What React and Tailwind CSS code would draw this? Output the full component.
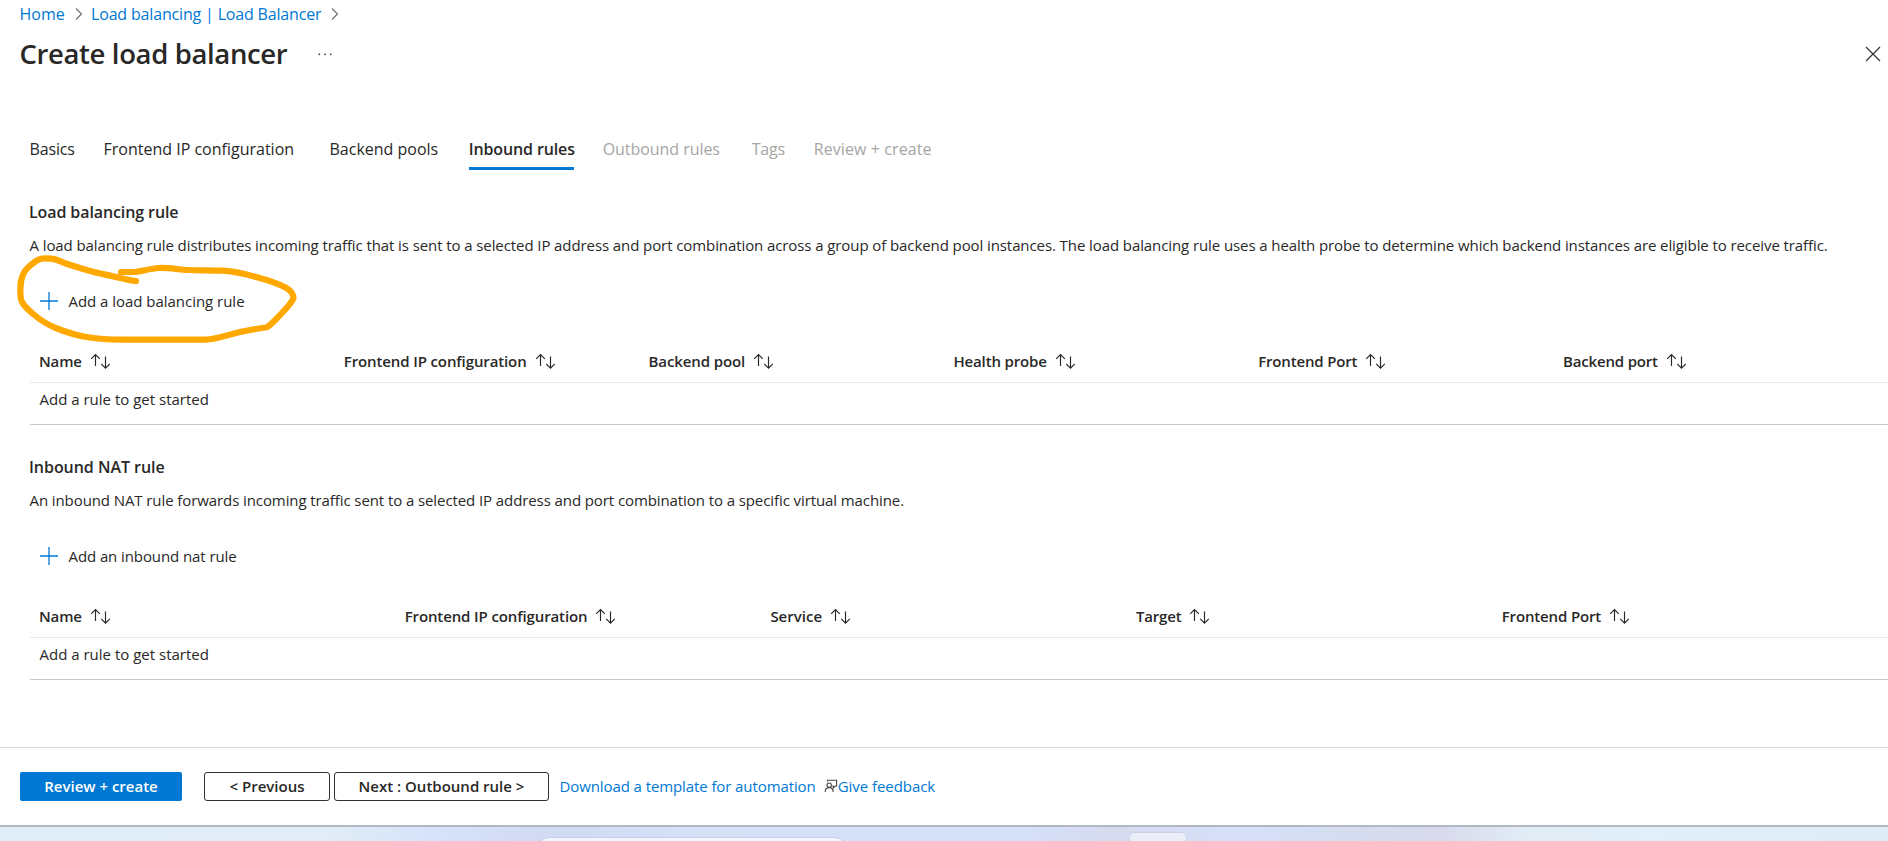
const CREATE_TABS = [
  { label: "Basics", cls: "w-[74px] tracking-[-0.15px] text-[#292827]" },
  { label: "Frontend IP configuration", cls: "w-[226px] text-[#292827]" },
  { label: "Backend pools", cls: "w-[139.2px] text-[#292827]" },
  { label: "Inbound rules", cls: "w-[134px] tracking-[-0.12px] font-semibold text-[#292827]", active: true },
  { label: "Outbound rules", cls: "w-[149px] tracking-[-0.05px] text-[#a6a5a4]" },
  { label: "Tags", cls: "w-[62px] tracking-[-0.2px] text-[#a6a5a4]" },
  { label: "Review + create", cls: "tracking-[0.1px] text-[#a6a5a4]" },
];

const LB_COLUMNS = [
  { label: "Name", cls: "tracking-[-0.15px]" },
  { label: "Frontend IP configuration", cls: "tracking-[-0.12px]" },
  { label: "Backend pool", cls: "tracking-[-0.12px]" },
  { label: "Health probe", cls: "tracking-[-0.14px]" },
  { label: "Frontend Port", cls: "tracking-[-0.17px]" },
  { label: "Backend port", cls: "tracking-[-0.17px]" },
];

const NAT_COLUMNS = [
  { label: "Name", cls: "tracking-[-0.15px]" },
  { label: "Frontend IP configuration", cls: "tracking-[-0.12px]" },
  { label: "Service" },
  { label: "Target", cls: "tracking-[-0.2px]" },
  { label: "Frontend Port", cls: "tracking-[-0.15px]" },
];

function Chevron() {
  return (
    <svg className="shrink-0" width="8" height="12" viewBox="0 0 8 12" fill="none" stroke="#6f6e6d" strokeWidth="1.1">
      <path d="M1 0.5 L6.5 6 L1 11.5" />
    </svg>
  );
}

function SortIcon() {
  return (
    <svg className="ml-2 shrink-0" width="21" height="16" viewBox="0 0 21 16" fill="none" stroke="#292827" strokeWidth="1.15">
      <path d="M5.5 13 V1.6 M1.2 5.8 L5.5 1.5 L9.8 5.8" />
      <path d="M15.5 3.6 V15 M11.2 10.8 L15.5 15.1 L19.8 10.8" />
    </svg>
  );
}

function PlusIcon() {
  return (
    <svg className="shrink-0" width="18" height="18" viewBox="0 0 18 18" fill="none" stroke="#0078d4" strokeWidth="1.3">
      <path d="M9 0 V18 M0 9 H18" />
    </svg>
  );
}

function FeedbackIcon() {
  return (
    <svg className="-mt-[2px] shrink-0" width="14" height="14" viewBox="0 0 14 14" fill="none" stroke="#484746" strokeWidth="1.1">
      <path d="M3.4 2.6 V1.2 H12.6 V7 H11.2 L9.2 9 V7 H8.4" />
      <circle cx="5.2" cy="6.2" r="2.2" />
      <path d="M1.2 13 C1.2 10.2 3 8.6 5.2 8.6 C7.4 8.6 9.2 10.2 9.2 13" />
    </svg>
  );
}

function RuleTable({ columns, gridCls }) {
  return (
    <div className="ml-[30px] flex flex-col">
      <div className={"grid h-[43px] border-b border-[#e9e8e7] pl-[9px] " + gridCls}>
        {columns.map((c) => (
          <div key={c.label} className="flex items-center text-[15px] font-semibold whitespace-nowrap">
            <span className={c.cls}>{c.label}</span>
            <SortIcon />
          </div>
        ))}
      </div>
      <div className="flex h-[42px] items-center border-b border-[#c8c7c6] pb-[9px] pl-[9.5px] text-[15px]">
        Add a rule to get started
      </div>
    </div>
  );
}

function Section({ title, titleCls, description, action, actionCls, columns, gridCls, children }) {
  return (
    <section className="flex flex-col">
      <h2 className={"ml-[29px] flex h-6 items-center text-[16px] font-semibold " + titleCls}>{title}</h2>
      <p className="mt-[9px] ml-[29.5px] flex h-6 items-center text-[15px] tracking-[-0.09px] whitespace-nowrap">
        {description}
      </p>
      <div className="relative mt-[28px] ml-[39.5px] flex h-8 w-max items-center gap-[11px] text-[15px]">
        <PlusIcon />
        <span className={actionCls}>{action}</span>
        {children}
      </div>
      <div className="h-[23px]" />
      <RuleTable columns={columns} gridCls={gridCls} />
    </section>
  );
}

function HighlightStroke() {
  return (
    <svg
      className="pointer-events-none absolute top-[-35px] left-[-29.5px]"
      width="300"
      height="100"
      viewBox="10 250 300 100"
      fill="none"
      stroke="#ffa800"
      strokeWidth="6.2"
      strokeLinecap="round"
      strokeLinejoin="round"
    >
      <path d="M136 281 C130 280.5 124 279 118 277.5 C108 275 99 273.5 90 271 C81 268.5 73 266 65 263.3 C59 260.5 55 259.2 51 258.7 C47 258.2 44 258 41 258.7 C37.5 259.7 35 261.5 32.6 263.5 C28 267 25 270 23.3 274 C21 279 20.4 283 20.4 288 C20.4 293 20 297 21.6 301 C23.5 306 28 309.5 32.6 313.5 C40 320 48 325 57 328.5 C67 332.5 77 335.5 88 337.3 C99 339.2 110 339.7 122 339.7 L206 339.7 C214 339.3 221 337 228.6 335 C241 331.5 254 329 267 327.3 C273 323 277 318 281.6 313.3 C286 308.5 291 304 293.5 298.3 C293.5 294 290.5 290.5 286 287.7 C277 283 267 280 257 277.3 C246 274 234 271.5 222.4 270.7 C211 270.2 199 270.5 188 270 C178 269.5 168 267.5 159 268 C150 268.5 143 271 134.7 272 L121 272" />
    </svg>
  );
}

export default function App() {
  return (
    <div className="flex h-[841px] w-full flex-col overflow-hidden bg-white font-['Open_Sans',sans-serif] text-[#292827]">
      <nav className="flex h-7 items-center pl-[19.5px] text-[16px] text-[#0078d4]">
        <a className="w-[55px]">Home</a>
        <Chevron />
        <a className="mr-[9.5px] ml-[8.5px] tracking-[-0.17px]">Load balancing | Load Balancer</a>
        <Chevron />
      </nav>

      <header className="flex h-[50px] items-center pt-px pr-[7px] pl-[19.5px]">
        <h1 className="pt-px text-[27.5px] leading-none font-semibold tracking-[-0.37px]">Create load balancer</h1>
        <svg className="ml-[30px]" width="16" height="4" viewBox="0 0 16 4" fill="#484746">
          <rect x="1.5" y="1.5" width="1.6" height="1.6" />
          <rect x="7.2" y="1.5" width="1.6" height="1.6" />
          <rect x="12.9" y="1.5" width="1.6" height="1.6" />
        </svg>
        <svg className="ml-auto" width="16" height="16" viewBox="0 0 16 16" fill="none" stroke="#323130" strokeWidth="1.2">
          <path d="M1 1 L15 15 M15 1 L1 15" />
        </svg>
      </header>

      <div className="mt-[52px] flex h-10 pl-[29.5px] text-[16px] whitespace-nowrap">
        {CREATE_TABS.map((t) => (
          <div key={t.label} className={"flex " + t.cls}>
            <span
              className={
                t.active
                  ? "flex w-[105.5px] items-center border-b-[3px] border-[#0078d4]"
                  : "flex items-center border-b-[3px] border-transparent"
              }
            >
              {t.label}
            </span>
          </div>
        ))}
      </div>

      <main className="flex flex-1 flex-col gap-[30px] pt-[30px]">
        <Section
          title="Load balancing rule"
          titleCls="tracking-[-0.1px]"
          description="A load balancing rule distributes incoming traffic that is sent to a selected IP address and port combination across a group of backend pool instances. The load balancing rule uses a health probe to determine which backend instances are eligible to receive traffic."
          action="Add a load balancing rule"
          actionCls="tracking-[-0.03px]"
          columns={LB_COLUMNS}
          gridCls="grid-cols-[repeat(6,304.8px)]"
        >
          <HighlightStroke />
        </Section>
        <Section
          title="Inbound NAT rule"
          titleCls="tracking-[-0.04px]"
          description="An inbound NAT rule forwards incoming traffic sent to a selected IP address and port combination to a specific virtual machine."
          action="Add an inbound nat rule"
          actionCls="tracking-[-0.09px]"
          columns={NAT_COLUMNS}
          gridCls="grid-cols-[repeat(5,365.7px)]"
        />
      </main>

      <footer className="flex h-[78px] items-center border-t border-[#dddcdb] pl-5 text-[15px] whitespace-nowrap">
        <button className="h-[29px] w-[162px] rounded-[2px] bg-[#0078d4] font-semibold text-white">Review + create</button>
        <button className="ml-[22px] h-[29px] w-[126px] rounded-[3px] border border-[#323130] font-semibold">{"< Previous"}</button>
        <button className="ml-1 h-[29px] w-[215px] rounded-[3px] border border-[#323130] font-semibold">{"Next : Outbound rule >"}</button>
        <a className="ml-[10.5px] tracking-[-0.095px] text-[#0078d4]">Download a template for automation</a>
        <a className="ml-[8px] flex items-center tracking-[-0.05px] text-[#0078d4]">
          <FeedbackIcon />
          Give feedback
        </a>
      </footer>

      <div className="flex h-4 items-start overflow-hidden border-t-2 border-[#b0b8c4] bg-[linear-gradient(90deg,#e0edf6_0px,#e1ecf7_330px,#d6e2fa_440px,#d3daf3_545px,#d6e1f8_720px,#d5e0f9_1020px,#d6dbef_1110px,#d6e0f8_1240px,#d5ddf1_1330px,#d8daec_1440px,#e2edf6_1530px,#e2eff8_1650px,#dfecf7_1888px)]">
        <div className="mt-[10px] ml-[535px] h-[30px] w-[314px] shrink-0 rounded-full border border-[#c3cfe6] bg-[#f3f7fd]" />
        <div className="mt-[5px] ml-[280px] h-[30px] w-[58px] shrink-0 rounded-[5px] border border-[#ccd2e6] bg-[#ebedf7]" />
      </div>
    </div>
  );
}
